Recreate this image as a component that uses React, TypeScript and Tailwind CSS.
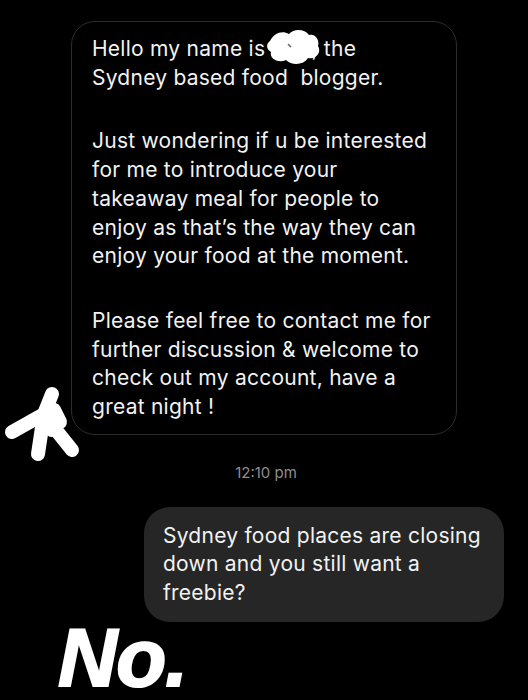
const Scribble = () => (
  <svg className="absolute left-[262px] top-[27px]" width="62" height="40" viewBox="0 0 62 40">
    <path
      d="M8 14 C12 6 20 3 27 7 C32 1 43 2 47 8 C53 6 58 13 56 19 C60 25 54 33 46 31 C42 38 30 39 24 33 C16 37 7 31 9 25 C3 21 5 16 8 14 Z"
      fill="#fff"
    />
    <path d="M13 19 L49 19 M17 27 L43 25 M19 12 L45 13" stroke="#fff" strokeWidth="10" strokeLinecap="round" />
    <path d="M26 17 L29 20" stroke="#666" strokeWidth="1.5" />
  </svg>
);

const Hand = () => (
  <svg className="absolute left-[2px] top-[380px]" width="80" height="84" viewBox="0 0 80 84">
    <g stroke="#fff" strokeWidth="14" strokeLinecap="round" strokeLinejoin="round" fill="none">
      <path d="M50 14 L42 34 L10 52" />
      <path d="M42 34 L36 74" />
      <path d="M46 40 L70 70" />
      <path d="M52 30 L58 42" />
      <path d="M38 40 L50 50" />
    </g>
  </svg>
);

export default function App() {
  return (
    <div className="relative flex h-[700px] w-[528px] flex-col overflow-hidden bg-black font-['Inter','Liberation_Sans',sans-serif] text-[21px] leading-[28.7px] tracking-[0.25px] text-[#f2f2f2]">
      <div className="ml-[71px] mt-[21px] w-[386px] rounded-[24px] border border-[#2c2c2c] pb-[12px] pl-[20px] pr-[8px] pt-[13px]">
        <p>
          Hello my name is <span className="inline-block w-[40px]" />, the
          <br />
          Sydney based food&nbsp; blogger.
        </p>
        <p className="mt-[35px]">
          Just wondering if u be interested
          <br />
          for me to introduce your
          <br />
          takeaway meal for people to
          <br />
          enjoy as that’s the way they can
          <br />
          enjoy your food at the moment.
        </p>
        <p className="mt-[36px]">
          Please feel free to contact me for
          <br />
          further discussion &amp; welcome to
          <br />
          check out my account, have a
          <br />
          great night !
        </p>
      </div>
      <div className="mt-[28px] pl-[4px] text-center text-[15px] leading-[20px] tracking-normal text-[#8e8e8e]">
        12:10 pm
      </div>
      <div className="ml-[144px] mt-[24px] w-[360px] rounded-[26px] bg-[#262626] px-[19px] pb-[15px] pt-[15px] leading-[28.5px]">
        Sydney food places are closing
        <br />
        down and you still want a
        <br />
        freebie?
      </div>
      <div className="ml-[58px] mt-[1px] font-['Liberation_Sans',sans-serif] text-[82px] font-bold italic leading-[70px] tracking-[-1px] text-white [-webkit-text-stroke:2px_white]">
        No.
      </div>
      <Scribble />
      <Hand />
    </div>
  );
}
